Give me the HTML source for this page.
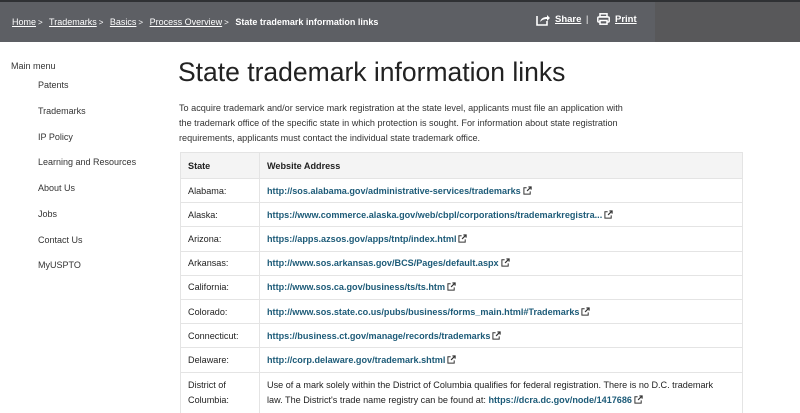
<!DOCTYPE html>
<html><head><style>
body{margin:0;width:800px;height:406px;overflow:hidden;background:#fff;font-family:"Liberation Sans",sans-serif;color:#222;position:relative}
.hdr{position:absolute;left:0;top:0;width:800px;height:42px;background:#5d5f64;border-top:2px solid #2f3134;box-sizing:border-box}
.hdr .r{position:absolute;left:655px;top:0;width:145px;height:40px;background:#58585a}
.bc{position:absolute;left:12px;top:15px;font-size:9px;color:#fff;white-space:nowrap}
.bc a{color:#fff;text-decoration:underline}
.bc span{margin:0 4px 0 2px;font-size:8px}
.sh{position:absolute;top:12px;font-size:9.5px;font-weight:bold;color:#fff;text-decoration:underline}
.nav{position:absolute;font-size:9px;color:#333;white-space:nowrap}
h1{position:absolute;left:178px;top:57px;margin:0;font-weight:normal;font-size:26.5px;color:#222;white-space:nowrap}
.p{position:absolute;left:179px;top:101px;font-size:9.1px;line-height:15px;color:#333;white-space:nowrap}
table{position:absolute;left:180px;top:152px;width:563px;border-collapse:collapse;font-size:9.1px}
td,th{border-top:1px solid #e4e4e4;text-align:left;padding:0 0 0 7px;height:23.2px;vertical-align:middle;white-space:nowrap}
th{background:#f4f4f4;height:25px;font-weight:bold;color:#222}
td:first-child,th:first-child{width:71px;border-right:1px solid #e4e4e4}
table{border-left:1px solid #e4e4e4;border-right:1px solid #e4e4e4}
a.l{color:#1d5b78;font-weight:bold;text-decoration:none}
.x{display:inline-block;width:9px;height:9px;margin-left:2px;vertical-align:-1px}
</style></head><body>
<svg width="0" height="0" style="position:absolute"><defs><symbol id="e" viewBox="0 0 10 10"><path d="M4 2H1v7h7V6" fill="none" stroke="#333" stroke-width="1.1"/><path d="M6 1h3v3M9 1L4.5 5.5" fill="none" stroke="#333" stroke-width="1.3"/></symbol></defs></svg>
<div class="hdr"><div class="r"></div>
<div class="bc"><a>Home</a><span>&gt;</span> <a>Trademarks</a><span>&gt;</span> <a>Basics</a><span>&gt;</span> <a>Process Overview</a><span>&gt;</span> <b>State trademark information links</b></div>
<svg style="position:absolute;left:536px;top:11px" width="14" height="13" viewBox="0 0 14 13"><path d="M1 3v9h10V8" fill="none" stroke="#fff" stroke-width="1.6"/><path d="M4 9c1-4 4-5 7-5V2l3 3-3 3V6C8 6 6 7 4 9z" fill="#fff"/></svg>
<div class="sh" style="left:555px">Share</div>
<div style="position:absolute;left:586px;top:12px;color:#fff;font-size:9px">|</div>
<svg style="position:absolute;left:597px;top:11px" width="13" height="12" viewBox="0 0 13 12"><rect x="3" y="0.8" width="7" height="3" fill="none" stroke="#fff" stroke-width="1.5"/><rect x="0.8" y="4" width="11.4" height="5" rx="1" fill="none" stroke="#fff" stroke-width="1.5"/><rect x="3" y="7.5" width="7" height="3.7" fill="#5d5f64" stroke="#fff" stroke-width="1.5"/></svg>
<div class="sh" style="left:615px">Print</div>
</div>
<div class="nav" style="left:11px;top:61px">Main menu</div>
<div class="nav" style="left:38px;top:80px">Patents</div>
<div class="nav" style="left:38px;top:106px">Trademarks</div>
<div class="nav" style="left:38px;top:132px">IP Policy</div>
<div class="nav" style="left:38px;top:157px">Learning and Resources</div>
<div class="nav" style="left:38px;top:183px">About Us</div>
<div class="nav" style="left:38px;top:209px">Jobs</div>
<div class="nav" style="left:38px;top:235px">Contact Us</div>
<div class="nav" style="left:38px;top:260px">MyUSPTO</div>
<h1>State trademark information links</h1>
<div class="p">To acquire trademark and/or service mark registration at the state level, applicants must file an application with<br>the trademark office of the specific state in which protection is sought. For information about state registration<br>requirements, applicants must contact the individual state trademark office.</div>
<table>
<tr><th>State</th><th>Website Address</th></tr>
<tr><td>Alabama:</td><td><a class="l">http://sos.alabama.gov/administrative-services/trademarks</a><svg class="x"><use href="#e"/></svg></td></tr>
<tr><td>Alaska:</td><td><a class="l">https://www.commerce.alaska.gov/web/cbpl/corporations/trademarkregistra...</a><svg class="x"><use href="#e"/></svg></td></tr>
<tr><td>Arizona:</td><td><a class="l">https://apps.azsos.gov/apps/tntp/index.html</a><svg class="x"><use href="#e"/></svg></td></tr>
<tr><td>Arkansas:</td><td><a class="l">http://www.sos.arkansas.gov/BCS/Pages/default.aspx</a><svg class="x"><use href="#e"/></svg></td></tr>
<tr><td>California:</td><td><a class="l">http://www.sos.ca.gov/business/ts/ts.htm</a><svg class="x"><use href="#e"/></svg></td></tr>
<tr><td>Colorado:</td><td><a class="l">http://www.sos.state.co.us/pubs/business/forms_main.html#Trademarks</a><svg class="x"><use href="#e"/></svg></td></tr>
<tr><td>Connecticut:</td><td><a class="l">https://business.ct.gov/manage/records/trademarks</a><svg class="x"><use href="#e"/></svg></td></tr>
<tr><td>Delaware:</td><td><a class="l">http://corp.delaware.gov/trademark.shtml</a><svg class="x"><use href="#e"/></svg></td></tr>
<tr><td style="height:40px;line-height:15px">District of<br>Columbia:</td><td style="line-height:15px">Use of a mark solely within the District of Columbia qualifies for federal registration. There is no D.C. trademark<br>law. The District's trade name registry can be found at: <a class="l">https://dcra.dc.gov/node/1417686</a><svg class="x"><use href="#e"/></svg></td></tr>
</table>
</body></html>
